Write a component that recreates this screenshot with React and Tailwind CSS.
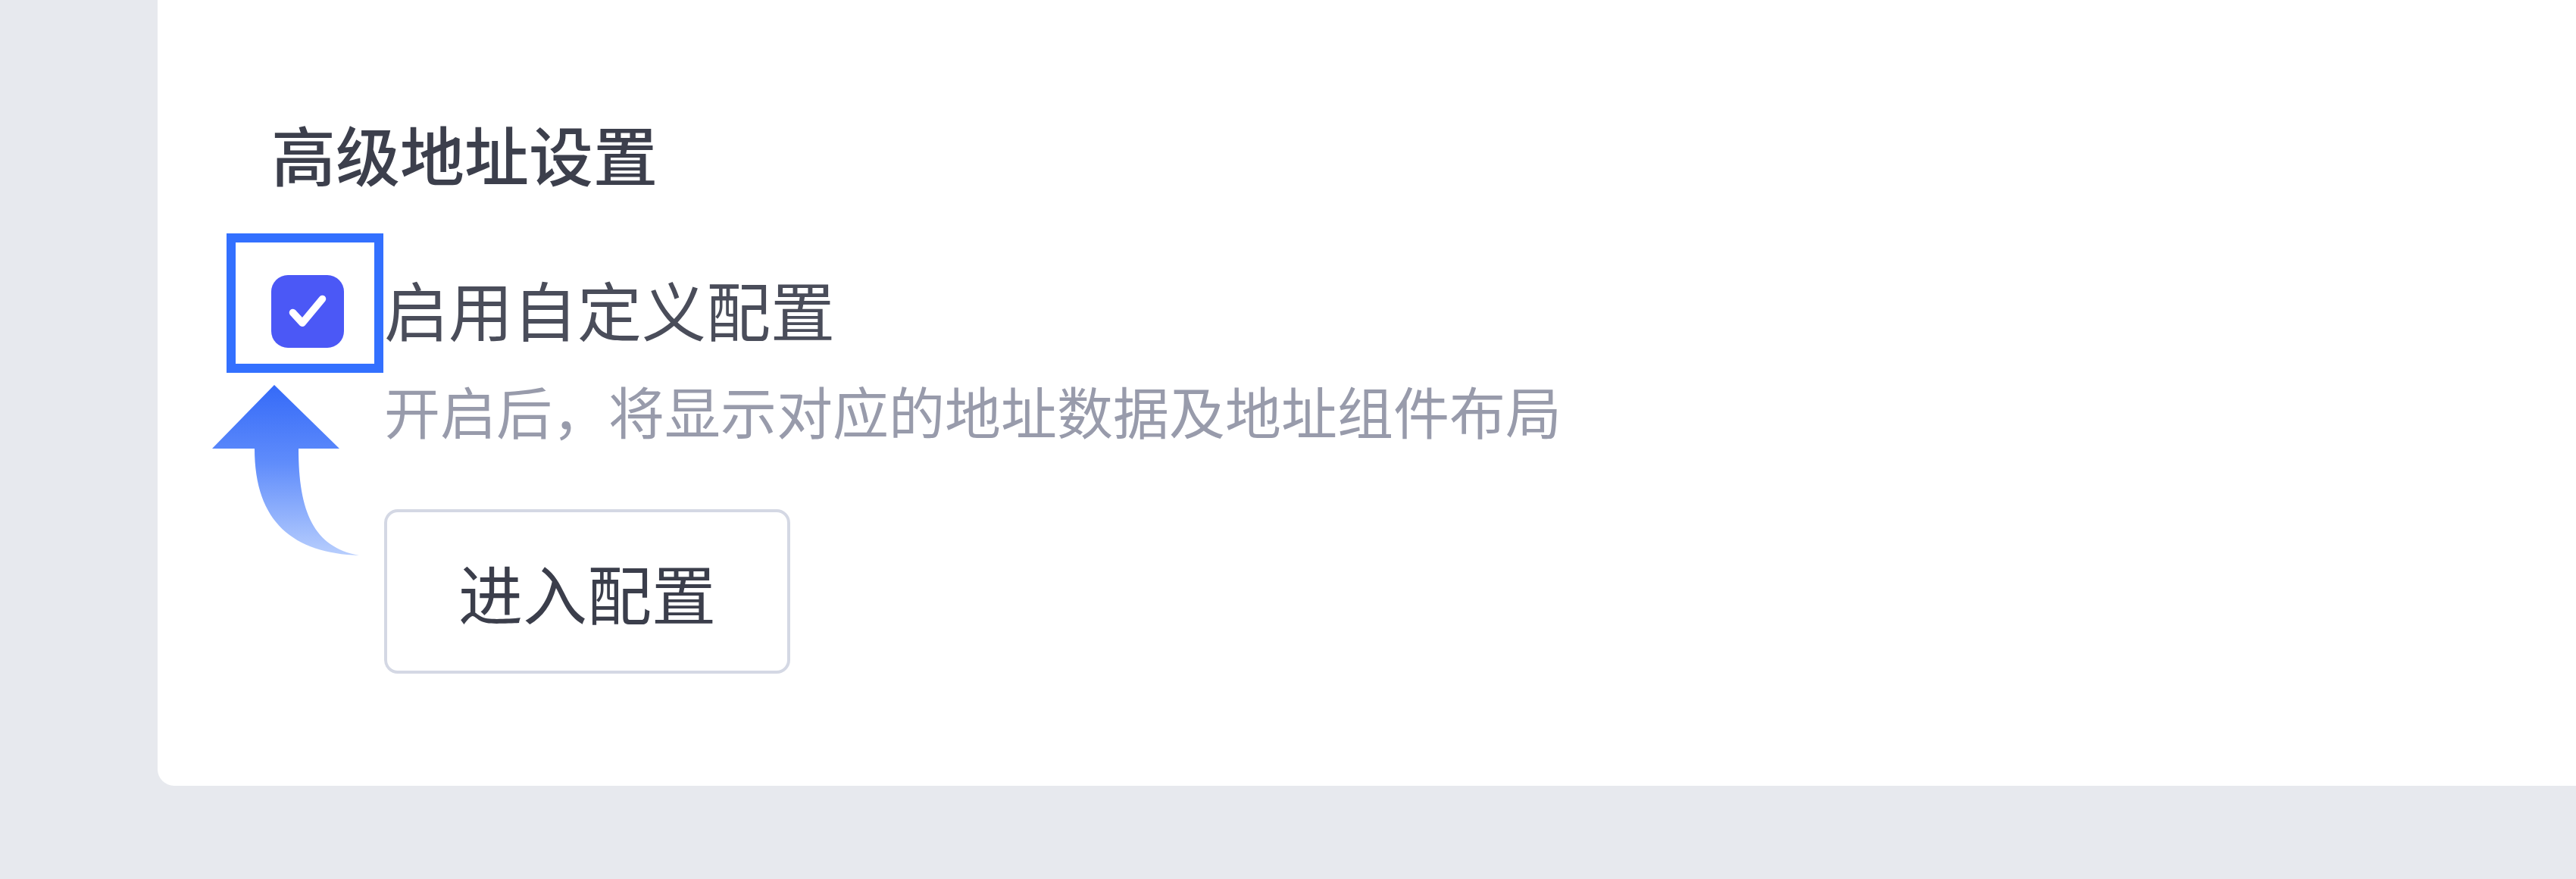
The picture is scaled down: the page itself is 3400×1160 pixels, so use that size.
import React from 'react';

const font = { fontFamily: '"Noto Sans CJK SC", "Noto Sans", sans-serif' };

function CheckBox() {
  return (
    <div className="w-[96px] h-[96px] rounded-[22px] bg-[#4b58f6] flex items-center justify-center shrink-0 mt-[16px]">
      <svg width="72" height="72" viewBox="0 0 24 24" fill="none">
        <path d="M5.5 12.5l4.2 4.6L18.5 6.5" stroke="#fff" strokeWidth="3.2" strokeLinecap="round" strokeLinejoin="round" />
      </svg>
    </div>
  );
}

function Arrow() {
  // curved annotation arrow pointing up at the checkbox
  return (
    <svg className="absolute left-[270px] top-[500px]" width="220" height="250" viewBox="270 500 220 250">
      <defs>
        <linearGradient id="arrowGrad" x1="0" y1="508" x2="0" y2="735" gradientUnits="userSpaceOnUse">
          <stop offset="0" stopColor="#356af8" />
          <stop offset="0.45" stopColor="#5f8cfb" />
          <stop offset="1" stopColor="#b9cffd" />
        </linearGradient>
      </defs>
      <path d="M362 508 L448 592 L394 592 C394 675 414 722 474 733 C388 730 336 690 336 592 L280 592 Z" fill="url(#arrowGrad)" />
    </svg>
  );
}

export default function App() {
  return (
    <div className="relative w-[3400px] h-[1160px] overflow-hidden bg-[#e7e9ee]" style={font}>
      <div className="ml-[208px] h-[1037px] bg-white rounded-bl-[22px] pt-[142px] pl-[150px]">
        <h2 className="text-[85px] leading-[120px] font-medium text-[#3c3f4c]">高级地址设置</h2>

        <div className="flex gap-[53px] mt-[85px]">
          <CheckBox />
          <div className="flex flex-col">
            <div className="text-[85px] leading-[120px] text-[#4a4d5a]">启用自定义配置</div>
            <div className="text-[74px] leading-[100px] mt-[24px] text-[#989bab]">
              开启后，将显示对应的地址数据及地址组件布局
            </div>
            <button className="mt-[81px] w-[536px] h-[217px] rounded-[18px] border-[4px] border-[#d4d8e4] bg-white text-[85px] text-[#3b3e4b] flex items-center justify-center">
              进入配置
            </button>
          </div>
        </div>
      </div>

      {/* highlight box around the checkbox */}
      <div className="absolute left-[299px] top-[308px] w-[207px] h-[184px] border-[12px] border-[#3370ff]" />
      <Arrow />
    </div>
  );
}
